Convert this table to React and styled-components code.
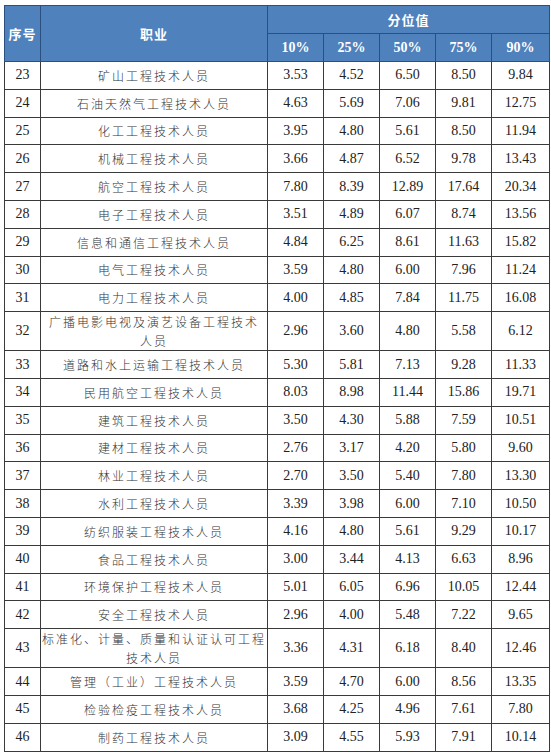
import React from 'react'
import styled, { createGlobalStyle } from 'styled-components'

const GlobalStyle = createGlobalStyle`
  html, body {
    margin: 0;
    padding: 0;
    background: #ffffff;
  }
`

const widths = [36, 227, 56, 56, 56, 56, 58]

const rows = [
  ['23', ['矿山工程技术人员'], '3.53', '4.52', '6.50', '8.50', '9.84'],
  ['24', ['石油天然气工程技术人员'], '4.63', '5.69', '7.06', '9.81', '12.75'],
  ['25', ['化工工程技术人员'], '3.95', '4.80', '5.61', '8.50', '11.94'],
  ['26', ['机械工程技术人员'], '3.66', '4.87', '6.52', '9.78', '13.43'],
  ['27', ['航空工程技术人员'], '7.80', '8.39', '12.89', '17.64', '20.34'],
  ['28', ['电子工程技术人员'], '3.51', '4.89', '6.07', '8.74', '13.56'],
  ['29', ['信息和通信工程技术人员'], '4.84', '6.25', '8.61', '11.63', '15.82'],
  ['30', ['电气工程技术人员'], '3.59', '4.80', '6.00', '7.96', '11.24'],
  ['31', ['电力工程技术人员'], '4.00', '4.85', '7.84', '11.75', '16.08'],
  ['32', ['广播电影电视及演艺设备工程技术', '人员'], '2.96', '3.60', '4.80', '5.58', '6.12'],
  ['33', ['道路和水上运输工程技术人员'], '5.30', '5.81', '7.13', '9.28', '11.33'],
  ['34', ['民用航空工程技术人员'], '8.03', '8.98', '11.44', '15.86', '19.71'],
  ['35', ['建筑工程技术人员'], '3.50', '4.30', '5.88', '7.59', '10.51'],
  ['36', ['建材工程技术人员'], '2.76', '3.17', '4.20', '5.80', '9.60'],
  ['37', ['林业工程技术人员'], '2.70', '3.50', '5.40', '7.80', '13.30'],
  ['38', ['水利工程技术人员'], '3.39', '3.98', '6.00', '7.10', '10.50'],
  ['39', ['纺织服装工程技术人员'], '4.16', '4.80', '5.61', '9.29', '10.17'],
  ['40', ['食品工程技术人员'], '3.00', '3.44', '4.13', '6.63', '8.96'],
  ['41', ['环境保护工程技术人员'], '5.01', '6.05', '6.96', '10.05', '12.44'],
  ['42', ['安全工程技术人员'], '2.96', '4.00', '5.48', '7.22', '9.65'],
  ['43', ['标准化、计量、质量和认证认可工程', '技术人员'], '3.36', '4.31', '6.18', '8.40', '12.46'],
  ['44', ['管理（工业）工程技术人员'], '3.59', '4.70', '6.00', '8.56', '13.35'],
  ['45', ['检验检疫工程技术人员'], '3.68', '4.25', '4.96', '7.61', '7.80'],
  ['46', ['制药工程技术人员'], '3.09', '4.55', '5.93', '7.91', '10.14'],
]

const Page = styled.div`
  padding: 5px 2px 0 4px;
`

const Table = styled.table`
  border-collapse: collapse;
  table-layout: fixed;
  width: 545px;
`

const Col = styled.col`
  width: ${p => p.$w}px;
`

const HeadCell = styled.th`
  background: #4f81bd;
  color: #ffffff;
  border: 1px solid #2b4f7e;
  height: 27px;
  padding: 0;
  text-align: center;
  vertical-align: middle;
  font-family: ${p => (p.$latin ? '"Liberation Serif", serif' : '"Noto Sans CJK SC", sans-serif')};
  font-size: ${p => (p.$latin ? '14px' : '13px')};
  font-weight: 700;
  letter-spacing: ${p => (p.$latin ? '0' : '1px')};
`

const Row = styled.tr`
  height: ${p => (p.$tall ? '38px' : '27.8px')};
`

const Cell = styled.td`
  border: 1px solid #3a3a3a;
  padding: 0;
  text-align: center;
  vertical-align: middle;
  color: #222222;
  font-family: "Liberation Serif", serif;
  font-size: 14px;
`

const JobCell = styled(Cell)`
  font-family: "Noto Sans CJK SC", sans-serif;
  font-weight: 300;
  font-size: 12px;
  letter-spacing: 2px;
  line-height: 19px;
  color: #333333;
`

const Line = styled.div`
  white-space: nowrap;
`

export default function App() {
  return (
    <Page>
      <GlobalStyle />
      <Table>
        <colgroup>
          {widths.map((w, i) => <Col key={i} $w={w} />)}
        </colgroup>
        <thead>
          <tr>
            <HeadCell rowSpan={2}>序号</HeadCell>
            <HeadCell rowSpan={2}>职业</HeadCell>
            <HeadCell colSpan={5}>分位值</HeadCell>
          </tr>
          <tr>
            {['10%', '25%', '50%', '75%', '90%'].map(p => (
              <HeadCell key={p} $latin>{p}</HeadCell>
            ))}
          </tr>
        </thead>
        <tbody>
          {rows.map(([no, job, ...vals]) => (
            <Row key={no} $tall={job.length > 1}>
              <Cell>{no}</Cell>
              <JobCell>
                {job.map(l => <Line key={l}>{l}</Line>)}
              </JobCell>
              {vals.map((v, i) => <Cell key={i}>{v}</Cell>)}
            </Row>
          ))}
        </tbody>
      </Table>
    </Page>
  )
}
